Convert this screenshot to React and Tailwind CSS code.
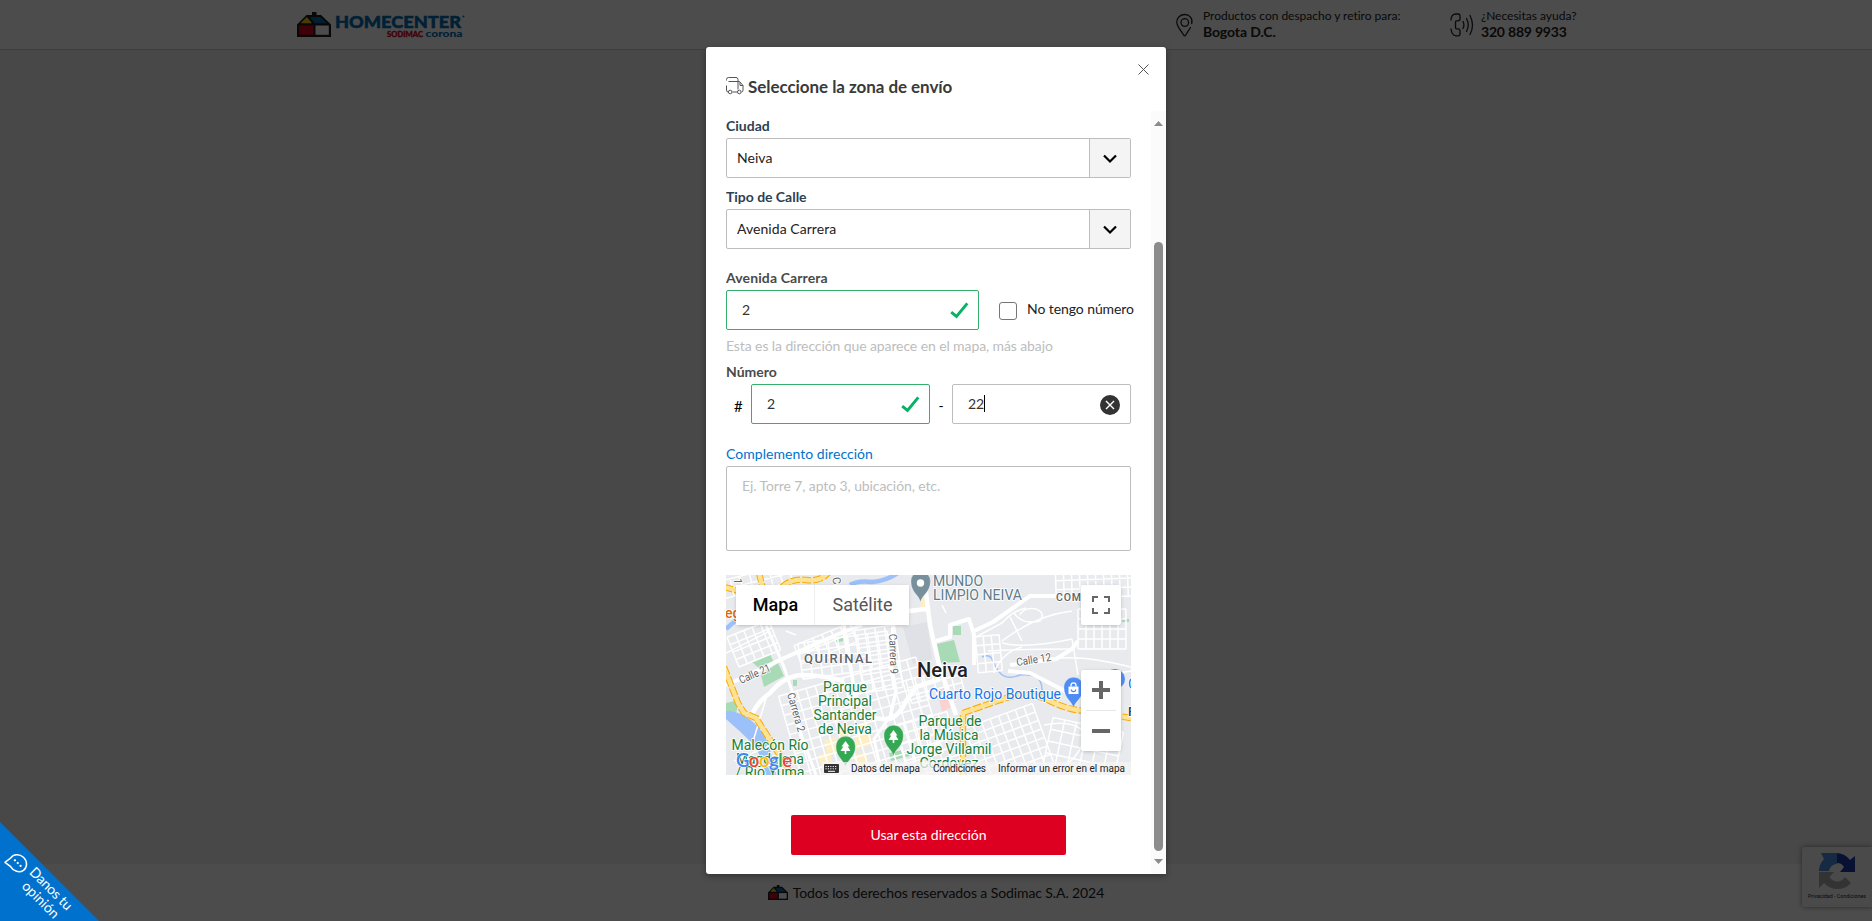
import React from "react";

const LATO = "font-['Lato','Carlito',sans-serif]";

function House({ className }) {
  return (
    <svg className={className} viewBox="0 0 34 25" preserveAspectRatio="none">
      <path d="M9.5 3H15V0h4.5v3H24l10 9.5V25H0V12.5z" fill="#1c1c1c" />
      <path d="M9.8 5L15 11.3H3.6z" fill="#f4d000" />
      <path d="M12.5 5h10.8l6.8 6.3H17.7z" fill="#0068a9" />
      <path d="M2 13.5h14.5v9.3H2z" fill="#d6001c" />
      <path d="M18.5 13.5h13.3v9.3H18.5z" fill="#fff" />
    </svg>
  );
}

function Header() {
  return (
    <header className="flex h-[50px] shrink-0 border-b border-[#ccc] bg-white">
      <div className="flex w-[1171px] pt-[12px] pl-[297px]">
        <House className="h-[25px] w-[34px]" />
        <svg className="ml-[4px] h-[30px] w-[132px]" viewBox="0 0 132 30">
          <text x="0" y="15.500" textLength="126" lengthAdjust="spacingAndGlyphs" fontFamily="Lato, sans-serif" fontWeight="900" fontSize="17.5" fill="#006bb3" stroke="#006bb3" strokeWidth=".5">HOMECENTER</text>
          <circle cx="128.500" cy="4.5" r="1" fill="#006bb3" />
          <text x="52" y="24.500" textLength="36" lengthAdjust="spacingAndGlyphs" fontFamily="Lato, sans-serif" fontWeight="900" fontSize="7.500" fill="#d6001c" stroke="#d6001c" strokeWidth=".3">SODIMAC</text>
          <text x="90.500" y="24.500" textLength="37" lengthAdjust="spacingAndGlyphs" fontFamily="Lato, sans-serif" fontWeight="900" fontSize="9.500" fill="#006bb3">corona</text>
        </svg>
      </div>
      <div className="flex w-[278px] pt-[13px] pl-[4px]">
        <svg className="h-[25px] w-[19px] shrink-0" viewBox="0 0 19 25" fill="none" stroke="#222" strokeWidth="1.3" strokeLinecap="round">
          <path d="M16.7 10.5C18 5.500 14.500 1.500 9.800 1.500C5 1.500 1.800 5 1.800 9.300C1.800 14 6.500 18 8.800 22.200Q9.700 23.500 10.600 22.200L15.500 14.500" />
          <circle cx="9.800" cy="9.500" r="3.800" />
        </svg>
        <div className="ml-[9px] text-[#222]">
          <div className="-mt-[5px] h-[16px] text-[12px] leading-[16px] tracking-[-0.02px] whitespace-nowrap">Productos con despacho y retiro para:</div>
          <div className="-mt-px text-[14px] leading-[17px] font-bold tracking-[-0.12px]">Bogota D.C.</div>
        </div>
      </div>
      <div className="flex pt-[13px]">
        <svg className="h-[24px] w-[25px] shrink-0" viewBox="0 0 25 24" fill="none" stroke="#222" strokeWidth="1.300" strokeLinecap="round">
          <path d="M2 7C2 3 4 1 7 1h2q2 0 2 2v3q0 1.800-2 1.800H7.500q-1 0-1 1v6q0 1 1 1H9q2 0 2 2v3q0 2-2 2H7C4 22.500 2.500 20 2 16" />
          <path d="M14 8.500q1.800 3.500 0 7M17.500 5.500q3.500 6.500 0 13M21 2.500q5 9.500 0 19" />
        </svg>
        <div className="ml-[7px] text-[#222]">
          <div className="-mt-[5px] h-[16px] text-[12px] leading-[16px] whitespace-nowrap">¿Necesitas ayuda?</div>
          <div className="-mt-px text-[14px] leading-[17px] font-bold tracking-[-0.2px]">320 889 9933</div>
        </div>
      </div>
    </header>
  );
}

function Label({ children, className = "" }) {
  return <div className={"h-[20px] text-[14px] leading-[20px] font-bold " + className}>{children}</div>;
}

function Select({ value }) {
  return (
    <div className="mt-[2px] flex h-[40px] w-[405px] rounded-[2px] border border-[#bdbdbd] bg-white">
      <div className="flex-1 pl-[10px] text-[14px] leading-[38px] tracking-[0.05px] text-[#222]">{value}</div>
      <div className="flex w-[41px] items-center justify-center border-l border-[#bdbdbd] bg-[#f4f4f4]">
        <svg className="mt-px h-[10px] w-[14px]" viewBox="0 0 14 10" fill="none" stroke="#000" strokeWidth="2.200">
          <path d="M1 1.500l6 6 6-6" />
        </svg>
      </div>
    </div>
  );
}

function Check() {
  return (
    <svg className="h-[17px] w-[19px]" viewBox="0 0 19 17" fill="none" stroke="#06b265" strokeWidth="2.900">
      <path d="M1.200 10.200l5.300 4.300L17.300 1.300" />
    </svg>
  );
}

function streets(x, y, cols, rows, dx, dy) {
  let d = "";
  for (let i = 0; i <= cols; i++) d += `M${x + i * dx} ${y}v${rows * dy}`;
  for (let j = 0; j <= rows; j++) d += `M${x} ${y + j * dy}h${cols * dx}`;
  return d;
}

function Pin({ x, y, color, children }) {
  return (
    <g transform={`translate(${x} ${y})`}>
      <path d="M0 19C-1.500 12-9.500 9-9.500-1A9.700 9.700 0 1 1 9.800-1C9.800 9 1.500 12 0 19z" fill={color} stroke="#fff" strokeOpacity=".35" strokeWidth=".8" />
      {children}
    </g>
  );
}

function Tree() {
  return <path d="M0-7l-4 5.500h1.800L-5 3h4.200v3H.8V3H5L2.200-1.500H4z" fill="#fff" />;
}

function T({ x, y, w, a = "start", size = 14.3, children, ...rest }) {
  return (
    <text x={x} y={y} textAnchor={a} textLength={w} lengthAdjust="spacingAndGlyphs" fontSize={size} paintOrder="stroke" stroke="#fff" strokeOpacity=".85" strokeWidth="2" strokeLinejoin="round" {...rest}>
      {children}
    </text>
  );
}

function Highway({ d }) {
  return (
    <g fill="none">
      <path d={d} stroke="#f9ab00" strokeWidth="6.400" strokeDasharray="9 2" />
      <path d={d} stroke="#fde293" strokeWidth="4.400" />
    </g>
  );
}

function MapArt() {
  return (
    <svg className="block h-[200px] w-[405px]" viewBox="0 0 405 200" fontFamily="Roboto, sans-serif">
      <rect width="405" height="200" fill="#e8eaed" />
      <path d="M177 52l24-5 5 37-19 5z" fill="#dfe1e6" />
      <g fill="#a8dab5">
        <path d="M26 87l18-8 4 9-14 6zM35 100l17-12 6 13-20 11zM0 128l13-3-3 14H0zM109 64l8-3v5l-7 2zM67 105h4v6h-4zM211 69l17-4 6 22-19 1zM227 51h8v9h-8zM163 178l14-3 7 6-12 3-7 2zM396 44h7v3h-7z" />
      </g>
      <path d="M128 150l14-4 4 24-16 5zM98 165l12-3 3 14-12 3zM112 155l9-3 3 8-10 3zM194 24l6-3 2 12-7 1zM92 180l12-3 3 14-11 3zM128 180l12-3 3 14-12 3z" fill="#fdefc3" />
      <path d="M211 116l8-4 6 20-9 5z" fill="#fad2cf" />
      <path d="M0 136Q18 136 32 152Q41 162 45 178L50 200H40Q35 180 28 170Q14 156 0 144z" fill="#9cc0fa" />
      <path d="M124 10Q132 5 146 7Q160 6 172 -2M0 54Q7 48 13 42" fill="none" stroke="#9cc0fa" strokeWidth="4.500" />
      <path d="M256 82Q264 78 267 86T275 99Q282 105 294 100Q304 99 310 102T316 115L322 120" fill="none" stroke="#9cc0fa" strokeWidth="1.500" />
      <g fill="none" stroke="#fff" strokeWidth="1.500">
        <path transform="rotate(-22 30 70)" d={streets(6, 52, 5, 4, 9, 8)} />
        <path transform="rotate(-22 120 55)" d={streets(66, 50, 6, 2, 10, 10)} />
        <path transform="rotate(-8 120 80)" d={streets(74, 62, 9, 4, 10, 9)} />
        <path transform="rotate(-16 90 150)" d={streets(62, 112, 15, 10, 9.5, 10)} />
        <path transform="rotate(-8 170 90)" d={streets(134, 50, 4, 7, 10, 9)} />
        <path transform="rotate(-16 220 170)" d={streets(176, 138, 6, 7, 9, 9)} />
        <path transform="rotate(-14 210 110)" d={streets(182, 98, 6, 3, 9, 8)} />
        <path transform="rotate(-20 290 160)" d={streets(244, 136, 8, 7, 9, 9)} />
        <path transform="rotate(-5 270 70)" d={streets(250, 60, 3, 4, 8, 9)} />
        <path transform="rotate(-2 350 15)" d={streets(330, -4, 10, 3, 8, 9)} />
        <path d={streets(352, 34, 6, 4, 8, 10)} />
        <path transform="rotate(12 360 170)" d={streets(322, 150, 6, 4, 12, 12)} />
        <path transform="rotate(-14 20 10)" d={streets(-4, 0, 7, 2, 10, 9)} />
        <path d="M216 30L220 38M250 62L276 48Q286 36 300 33M284 42L296 66M276 68Q300 74 346 64M276 66Q310 40 346 36M262 76Q290 74 346 74M268 98Q275 78 296 72M288 38q8 12 26 8q6-8-4-12q-12-2-16 6M322 85Q350 78 405 92M346 64L352 100M40 124L24 176M8 186L50 168M380 100L405 96M0 78L44 56M60 56L70 60M318 150Q350 144 360 160Q352 186 330 196" />
      </g>
      <g fill="none" stroke="#fff" strokeWidth="4.500" strokeLinejoin="round">
        <path d="M24 144Q30 128 44 118Q58 101 76 100Q96 100 118 106M136 136Q150 146 164 144Q174 140 180 126L190 112L214 104" />
        <path d="M0 110L14 104L56 84L110 60L136 50" strokeWidth="4" />
        <path d="M167 50L165 90L170 116L164 143M118 50L121 76L126 100L130 130" strokeWidth="3.500" />
        <path d="M199 10L204 50L213 90L230 140M183 36L200 34" strokeWidth="4.500" />
        <path d="M210 66L224 62V50L243 44L248 60V90M248 56L267 47L304 21H330" strokeWidth="4" />
        <path d="M282 96L304 98L335 114L345 120M284 90L330 84L346 74L352 66" strokeWidth="4" />
        <path d="M40 50L58 92L66 116L74 156L90 200M163 143L148 164L156 200" strokeWidth="3" />
      </g>
      <Highway d="M-2 92L12 128L18 138L30 143L46 168L60 190L66 204" />
      <Highway d="M33 -2L40 26L42 50" />
      <Highway d="M-2 12L20 18M56 12Q66 3 80 5T102 -2" />
      <Highway d="M237 204V138L274 125Q300 116 320 124Q340 135 360 136L405 143" />

      <T x="12" y="7" size="11" fill="#5f6368" transform="rotate(90 12 3)">1</T>
      <T x="107" y="10" size="11" fill="#5f6368" transform="rotate(80 111 6)">C</T>
      <T x="-1" y="43" size="14" fill="#d56e0c" fontWeight="500">eg</T>
      <T x="15" y="109" w="33" size="11" fill="#5f6368" transform="rotate(-24 15 109)">Calle 21</T>
      <T x="61" y="119" w="40" size="11" fill="#5f6368" transform="rotate(74 61 119)">Carrera 2</T>
      <T x="163" y="59" w="40" size="11" fill="#5f6368" transform="rotate(88 163 59)">Carrera 9</T>
      <T x="291" y="91" w="35" size="11" fill="#5f6368" transform="rotate(-9 291 91)">Calle 12</T>
      <T x="78" y="87.500" w="68" size="13" fill="#5f6368" fontWeight="500" lengthAdjust="spacing">QUIRINAL</T>
      <T x="330" y="25.500" w="25" size="10.500" fill="#5f6368" fontWeight="500" lengthAdjust="spacing">COM</T>
      <T x="191" y="102" w="51" size="20" fill="#202124" fontWeight="500">Neiva</T>
      <T x="207" y="11" w="50" fill="#607d8b">MUNDO</T>
      <T x="207" y="25" w="89" fill="#607d8b">LIMPIO NEIVA</T>
      <T x="203" y="124" w="132" fill="#1a73e8">Cuarto Rojo Boutique</T>
      <T x="402" y="114" fill="#1a73e8">C</T>
      <T x="402" y="141" size="13" fill="#3c4043" fontWeight="500">R</T>
      <g fill="#188038">
        <T x="119" y="117" w="44" a="middle">Parque</T>
        <T x="119" y="131" w="54" a="middle">Principal</T>
        <T x="119" y="145" w="63" a="middle">Santander</T>
        <T x="119" y="159" w="54" a="middle">de Neiva</T>
        <T x="44" y="175" w="77" a="middle">Malecón Río</T>
        <T x="44" y="189" w="68" a="middle">Magdalena</T>
        <T x="44" y="202" w="69" a="middle">/ Río Yuma</T>
        <T x="224" y="151" w="63" a="middle">Parque de</T>
        <T x="223" y="165" w="59" a="middle">la Música</T>
        <T x="223" y="179" w="85" a="middle">Jorge Villamil</T>
        <T x="223" y="193" w="59" a="middle">Cordovez</T>
      </g>
      <Pin x={194.500} y={8} color="#78909c"><circle r="3.700" cy="0" fill="#fff" /></Pin>
      <Pin x={119.500} y={173} color="#34a853"><Tree /></Pin>
      <Pin x={167.500} y={162} color="#34a853"><Tree /></Pin>
      <Pin x={347.500} y={114} color="#4f8df5">
        <path d="M-5-2.500H5V5H-5z" fill="#fff" />
        <path d="M-2.500-2.500v-1.200a2.500 2.500 0 0 1 5 0v1.200" fill="none" stroke="#fff" strokeWidth="1.300" />
        <path d="M-2.200.5a2.200 2.200 0 0 0 4.400 0" fill="none" stroke="#4285f4" strokeWidth="1.200" />
      </Pin>
      <circle cx="389" cy="104" r="10" fill="#4f8df5" />
      <rect x="96" y="187" width="309" height="13" fill="#f5f5f5" opacity=".72" />
      <g fontSize="18.500" fontWeight="600" paintOrder="stroke" stroke="#fff" strokeOpacity=".8" strokeWidth="1.500" strokeLinejoin="round">
        <text x="10" y="192" textLength="56" fontFamily="Lato, sans-serif">
          <tspan fill="#4285f4">G</tspan><tspan fill="#ea4335">o</tspan><tspan fill="#fbbc04">o</tspan><tspan fill="#4285f4">g</tspan><tspan fill="#34a853">l</tspan><tspan fill="#ea4335">e</tspan>
        </text>
      </g>
      <rect x="98" y="189" width="15" height="9" rx="1" fill="#333" />
      <path d="M99.500 191.500h12M99.500 193.800h12" stroke="#fff" strokeWidth="1.100" strokeDasharray="1.100 1.300" />
      <path d="M102 196.300h7" stroke="#fff" strokeWidth="1" />
      <g fontSize="10" fill="#222">
        <text x="125" y="197" textLength="69">Datos del mapa</text>
        <text x="207" y="197" textLength="53">Condiciones</text>
        <text x="272" y="197" textLength="127">Informar un error en el mapa</text>
      </g>
    </svg>
  );
}

function MapPanel() {
  return (
    <div className="relative mt-[24px] h-[200px] w-[405px] overflow-hidden font-['Roboto',sans-serif]">
      <MapArt />
      <div className="absolute top-[10px] left-[10px] flex h-[40px] w-[173px] bg-white text-[18px] leading-[40px] shadow-[0_1px_4px_-1px_rgba(0,0,0,0.3)]">
        <div className="w-[79px] border-r border-[#eee] pl-px text-center font-medium text-black">Mapa</div>
        <div className="flex-1 pl-px text-center text-[#565656]">Satélite</div>
      </div>
      <div className="absolute top-[10px] left-[355px] flex h-[40px] w-[40px] items-center justify-center rounded-[2px] bg-white shadow-[0_1px_4px_-1px_rgba(0,0,0,0.3)]">
        <svg className="h-[18px] w-[18px]" viewBox="0 0 18 18" fill="#666"><path d="M0 0h6v2H2v4H0zM12 0h6v6h-2V2h-4zM0 12h2v4h4v2H0zM16 12h2v6h-6v-2h4z" /></svg>
      </div>
      <div className="absolute top-[95px] left-[355px] flex h-[81px] w-[40px] flex-col items-center rounded-[2px] bg-white shadow-[0_1px_4px_-1px_rgba(0,0,0,0.3)]">
        <svg className="mt-[11px] h-[18px] w-[18px]" viewBox="0 0 18 18" fill="#666"><path d="M7 0h4v7h7v4h-7v7H7v-7H0V7h7z" /></svg>
        <div className="mt-[11px] h-px w-[30px] bg-[#e6e6e6]" />
        <div className="mt-[18px] h-[4px] w-[18px] bg-[#666]" />
      </div>
    </div>
  );
}

function Modal() {
  return (
    <div className="flex h-[827px] w-[460px] flex-col rounded-[3px] rounded-br-none bg-white shadow-[0_2px_6px_rgba(0,0,0,0.35)]">
      <div className="flex h-[64px] shrink-0 justify-between pl-[20px]">
        <div className="flex pt-[29px]">
          <svg className="mt-px h-[18px] w-[18px]" viewBox="0 0 18 18" fill="none" stroke="#555" strokeWidth="1">
            <path d="M.5 3.500V2.500Q.5.500 2.500.5H10Q12 .5 12 2.500V12.500M2.500 4.500H12M.5 8.500V13Q.5 15 2 15M6.500 15H11.500M12 4.500H13.500L17 8.500V13Q17 15 15.500 15M17 8.500H14V5" />
            <circle cx="4.200" cy="15" r="1.800" /><circle cx="13.300" cy="15" r="1.800" />
          </svg>
          <h2 className="mt-px ml-[4px] text-[17px] leading-[20px] font-bold tracking-[-0.06px] whitespace-nowrap text-[#3a3a3a]">Seleccione la zona de envío</h2>
        </div>
        <svg className="mt-[17px] mr-[17px] h-[11px] w-[11px]" viewBox="0 0 11 11" stroke="#555" strokeWidth="1"><path d="M.5.5l10 10M10.500.5l-10 10" /></svg>
      </div>
      <div className="flex min-h-0 flex-1">
        <div className="w-[445px] pt-[5px] pl-[20px]">
          <Label className="text-[#2c4152]">Ciudad</Label>
          <Select value="Neiva" />
          <Label className="mt-[9px] tracking-[-0.03px] text-[#2c4152]">Tipo de Calle</Label>
          <Select value="Avenida Carrera" />
          <Label className="mt-[19px] tracking-[0.12px] text-[#4a4a4a]">Avenida Carrera</Label>
          <div className="mt-[2px] flex">
            <div className="flex h-[40px] w-[253px] items-center justify-between rounded-[2px] border border-[#34b06c] pr-[9px] pl-[15px] text-[14px] text-[#333]">
              <span className="-mt-[2px]">2</span>
              <Check />
            </div>
            <div className="mt-[12px] ml-[20px] h-[18px] w-[18px] rounded-[3px] border border-[#767676]" />
            <span className="mt-[9px] ml-[10px] text-[14px] leading-[20px] tracking-[-0.08px] whitespace-nowrap text-[#222]">No tengo número</span>
          </div>
          <div className="mt-[6px] h-[20px] text-[14px] leading-[20px] tracking-[-0.1px] text-[#bdbdbd]">Esta es la dirección que aparece en el mapa, más abajo</div>
          <Label className="mt-[6px] text-[#4a4a4a]">Número</Label>
          <div className="mt-[2px] flex text-[14px] text-[#333]">
            <span className="w-[25px] pt-[12px] pl-[8px] text-[15px] leading-[20px] text-black">#</span>
            <div className="flex h-[40px] w-[179px] items-center justify-between rounded-[2px] border border-[#34b06c] pr-[9px] pl-[15px]">
              <span className="-mt-[2px]">2</span>
              <Check />
            </div>
            <span className="w-[22px] pt-[12px] text-center leading-[20px] text-black">-</span>
            <div className="flex h-[40px] w-[179px] items-center rounded-[2px] border border-[#bdbdbd] pr-[10px] pl-[15px]">
              <span className="-mt-[2px]">22</span>
              <span className="-mt-px h-[17px] w-px bg-black" />
              <svg className="mt-px ml-auto h-[20px] w-[20px]" viewBox="0 0 20 20"><circle cx="10" cy="10" r="10" fill="#333" /><path d="M6 6l8 8M14 6l-8 8" stroke="#fff" strokeWidth="1.400" /></svg>
            </div>
          </div>
          <div className="mt-[20px] h-[20px] text-[14px] leading-[20px] tracking-[0.04px] text-[#0072ce]">Complemento dirección</div>
          <div className="mt-[2px] h-[85px] w-[405px] rounded-[2px] border border-[#bdbdbd] pt-[9px] pl-[15px] text-[14px] leading-[20px] tracking-[-0.1px] text-[#bdbdbd]">Ej. Torre 7, apto 3, ubicación, etc.</div>
          <MapPanel />
          <button className="mt-[40px] ml-[65px] block h-[40px] w-[275px] rounded-[2px] bg-[#dd0021] pb-[2px] text-[14px] text-white">Usar esta dirección</button>
        </div>
        <div className="flex w-[15px] flex-col items-center bg-[#fbfbfb]">
          <svg className="mt-[10px] h-[5px] w-[9px] shrink-0" viewBox="0 0 9 5"><path d="M4.500 0L9 5H0z" fill="#8b8b8b" /></svg>
          <div className="mt-[116px] h-[609px] w-[9px] shrink-0 rounded-full bg-[#8b8b8b]" />
          <svg className="mt-[8px] h-[5px] w-[9px] shrink-0" viewBox="0 0 9 5"><path d="M4.500 5L9 0H0z" fill="#8b8b8b" /></svg>
        </div>
      </div>
    </div>
  );
}

function Captcha() {
  return (
    <div className="absolute right-0 bottom-[14px] flex h-[60px] w-[70px] flex-col items-center overflow-hidden rounded-l-[3px] bg-[#f9f9f9] pt-[5px] shadow-[0_0_5px_gray]">
      <svg className="h-[40px] w-[38px]" viewBox="0 0 38 40">
        <path d="M1 19A18 18 0 0 1 6 7L3 1H19V12A8 8 0 0 0 11 19z" fill="#4a90e2" />
        <path d="M19 1A18 18 0 0 1 32 8L37 4V20H22L26 15A8 8 0 0 0 19 11z" fill="#1c3aa9" />
        <path d="M1 20H16L11.500 25A9 9 0 0 0 27 25L33 31A18 18 0 0 1 6 31L1 36z" fill="#ababab" />
      </svg>
      <svg className="h-[9px] w-[58px]" viewBox="0 0 58 9"><text x="0" y="6" textLength="58" lengthAdjust="spacingAndGlyphs" fontFamily="Roboto, sans-serif" fontSize="5.500" fill="#222">Privacidad - Condiciones</text></svg>
    </div>
  );
}

export default function App() {
  return (
    <div className={"relative flex h-[921px] w-[1872px] flex-col overflow-hidden bg-[#f0f0f0] " + LATO}>
      <Header />
      <main className="flex-1" />
      <footer className="flex h-[57px] shrink-0 justify-center bg-white">
        <div className="flex pt-[21px]">
          <House className="h-[15px] w-[20px]" />
          <span className="-mt-[2px] ml-[5px] text-[14px] leading-[20px] tracking-[-0.1px] text-[#222]">Todos los derechos reservados a Sodimac S.A. 2024</span>
        </div>
      </footer>
      <Captcha />
      <div className="absolute inset-0 flex justify-center bg-black/70 pt-[47px]">
        <Modal />
      </div>
      <div className="absolute bottom-0 left-0 h-[99px] w-[99px]">
        <svg className="h-[99px] w-[99px]" viewBox="0 0 99 99">
          <path d="M0 0L99 99H0z" fill="#0072ce" />
          <g transform="translate(17 41) rotate(45)" fill="none" stroke="#fff" strokeWidth="1.500" strokeLinecap="round">
            <path d="M-9 8L-8 1A9 8 0 1 1-2 7L-9 8" />
            <path d="M-3.500-.5h.1M.5-.5h.1M4.500-.5h.1" strokeWidth="2.200" />
          </g>
          <g fill="#fff" fontFamily="Lato, sans-serif" fontSize="14">
            <text transform="translate(28.500 51) rotate(45)" textLength="54">Danos tu</text>
            <text transform="translate(21 65) rotate(45)" textLength="46">opinión</text>
          </g>
        </svg>
      </div>
    </div>
  );
}
